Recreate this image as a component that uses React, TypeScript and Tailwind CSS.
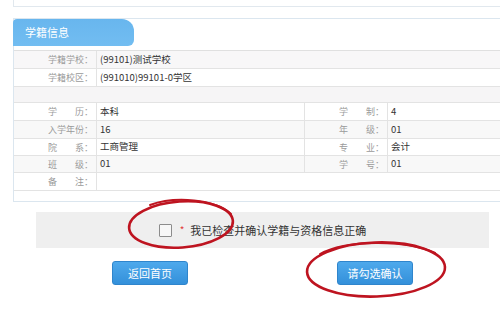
import React from "react";

const Label = ({ chars }: { chars: string[] }) => (
  <div className="w-[83px] shrink-0 flex justify-end items-center pr-[3px] border-r border-[#e3e3e3] text-[#9a9a9a] text-[9px]">
    <span className="w-[36px] flex justify-between">
      {chars.map((c, i) => (
        <span key={i}>{c}</span>
      ))}
    </span>
    <span className="w-[9px]">：</span>
  </div>
);

type Row = {
  h: string;
  bg: string;
  l1: string[];
  v1: string;
  l2?: string[];
  v2?: string;
};

const rows: Row[] = [
  { h: "h-[18px]", bg: "bg-white", l1: ["学", "历"], v1: "本科", l2: ["学", "制"], v2: "4" },
  { h: "h-[18px]", bg: "bg-[#f8f8f8]", l1: ["入", "学", "年", "份"], v1: "16", l2: ["年", "级"], v2: "01" },
  { h: "h-[17px]", bg: "bg-white", l1: ["院", "系"], v1: "工商管理", l2: ["专", "业"], v2: "会计" },
  { h: "h-[17px]", bg: "bg-[#f8f8f8]", l1: ["班", "级"], v1: "01", l2: ["学", "号"], v2: "01" },
  { h: "h-[18px]", bg: "bg-white", l1: ["备", "注"], v1: "" },
];

export default function App() {
  return (
    <div className="relative w-[500px] h-[310px] overflow-hidden bg-white font-['Noto_Sans_CJK_SC',sans-serif] text-[9.5px] leading-none text-[#333]">
      {/* previous panel remnant */}
      <div className="ml-[13px] h-[7px] border-l border-b border-[#e1e8ee]" />

      {/* 学籍信息 panel */}
      <div className="mt-[11px] ml-[13px] h-[184px] border-t border-l border-b border-[#dbe6ef]">
        <div className="-ml-px w-[121px] h-[27px] flex items-center pl-[12px] rounded-tl-[4px] rounded-tr-[12px] rounded-br-[6px] bg-gradient-to-b from-[#68b6ee] to-[#72bdf1] text-white text-[11px]">
          学籍信息
        </div>

        <div className="mt-[4px] border-t border-[#e0e0e0]">
          <div className="h-[18px] flex border-b border-[#e3e3e3] bg-[#f8f7f8]">
            <Label chars={["学", "籍", "学", "校"]} />
            <div className="flex items-center pl-[3px]">(99101)测试学校</div>
          </div>
          <div className="h-[18px] flex border-b border-[#e3e3e3] bg-white">
            <Label chars={["学", "籍", "校", "区"]} />
            <div className="flex items-center pl-[3px]">(991010)99101-0学区</div>
          </div>
          <div className="h-[16px] border-b border-[#e3e3e3] bg-[#f6f5f6]" />
          {rows.map((r, i) => (
            <div key={i} className={`${r.h} ${r.bg} flex border-b border-[#e3e3e3]`}>
              <Label chars={r.l1} />
              {r.l2 ? (
                <>
                  <div className="w-[208px] shrink-0 flex items-center pl-[3px] border-r border-[#e3e3e3]">{r.v1}</div>
                  <Label chars={r.l2} />
                  <div className="flex items-center pl-[3px]">{r.v2}</div>
                </>
              ) : (
                <div className="flex items-center pl-[3px]">{r.v1}</div>
              )}
            </div>
          ))}
        </div>
      </div>

      {/* confirm bar */}
      <div className="mt-[10px] ml-[36px] w-[453px] h-[36px] bg-[#efefef] flex items-center justify-center">
        <div className="w-[13px] h-[13px] border border-[#8c8c8c] bg-[#f7f7f7] rounded-[1px]" />
        <span className="ml-[8px] text-[#e23b3b] text-[10px]">*</span>
        <span className="ml-[6px] text-[11px] text-[#333]">我已检查并确认学籍与资格信息正确</span>
      </div>

      {/* buttons */}
      <div className="mt-[13px] ml-[36px] w-[453px] flex justify-center gap-[149px]">
        <button className="w-[76px] h-[24px] rounded-[3px] border border-[#2f85cc] bg-gradient-to-b from-[#4ea9ec] to-[#3390da] text-white text-[11px] flex items-center justify-center">
          返回首页
        </button>
        <button className="w-[76px] h-[24px] rounded-[3px] border border-[#2f85cc] bg-gradient-to-b from-[#4ea9ec] to-[#3390da] text-white text-[11px] flex items-center justify-center">
          请勾选确认
        </button>
      </div>

      {/* red hand-drawn circles */}
      <svg className="absolute inset-0 pointer-events-none" width="500" height="310" viewBox="0 0 500 310">
        <g fill="none" stroke="#be1420" strokeLinecap="round">
          <ellipse cx="181" cy="224.5" rx="52" ry="23" transform="rotate(-4 181 224.5)" strokeWidth="2.6" />
          <path d="M150 205 C 175 196, 215 199, 231 214" strokeWidth="2" />
          <ellipse cx="376" cy="269.5" rx="69" ry="27" transform="rotate(-2 376 269.5)" strokeWidth="2.6" />
          <path d="M320 254 C 345 240, 405 239, 435 253" strokeWidth="2" />
        </g>
      </svg>
    </div>
  );
}
